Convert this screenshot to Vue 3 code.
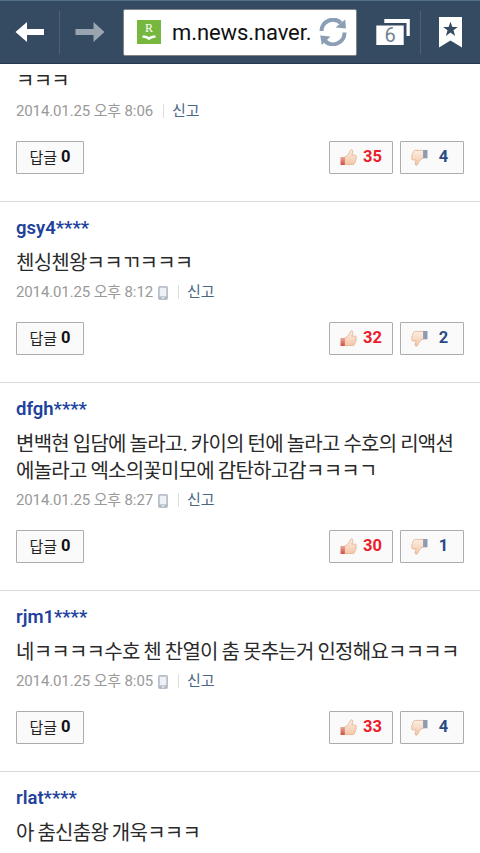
<template>
  <div class="screen">
    <header class="browser-bar">
      <button class="nav-btn back" aria-label="Back">
        <svg width="30" height="22" viewBox="0 0 30 22">
          <path d="M0.5 11 L12 1 V8 H29 V14 H12 V21 Z" fill="#fff" />
        </svg>
      </button>
      <span class="bar-line"></span>
      <button class="nav-btn forward" aria-label="Forward">
        <svg width="30" height="22" viewBox="0 0 30 22">
          <path d="M29.5 11 L18.5 1 V8 H0.5 V14 H18.5 V21 Z" fill="#99a5b0" />
        </svg>
      </button>
      <div class="address">
        <span class="favicon">
          <span class="favicon-letter">R</span>
          <svg width="14" height="6" viewBox="0 0 14 6">
            <path d="M0.5 0.5 C3 0.3 5.5 0.8 7 2.2 C8.5 0.8 11 0.3 13.5 0.5 V2.7 C10.5 2.7 8.5 3.5 7 5.3 C5.5 3.5 3.5 2.7 0.5 2.7 Z" fill="#fff" />
          </svg>
        </span>
        <span class="url">m.news.naver.</span>
        <svg class="reload" width="28" height="28" viewBox="0 0 28 28">
          <path d="M2.5 13 A11.5 11.5 0 0 1 22 5" fill="none" stroke="#8a9fb5" stroke-width="4" />
          <path d="M26.2 1.5 L27 10.5 L16.5 9.5 Z" fill="#8a9fb5" />
          <path d="M25.5 14.5 A11.5 11.5 0 0 1 6 23" fill="none" stroke="#8a9fb5" stroke-width="4" />
          <path d="M1.2 17.5 L11.5 18.5 L2.8 27 Z" fill="#8a9fb5" />
        </svg>
      </div>
      <div class="tabs">
        <svg width="34" height="28" viewBox="0 0 34 28">
          <path d="M8.3 1 H33.8 V18 H30.5 V5 H8.3 Z" fill="#fff" />
          <rect x="0.3" y="7.5" width="27.4" height="19.5" fill="#fff" />
        </svg>
        <span class="tab-count">6</span>
      </div>
      <span class="bar-line right"></span>
      <svg class="bookmark" width="23" height="31" viewBox="0 0 23 31">
        <path d="M0 0 H23 V30.5 L11.5 23.5 L0 30.5 Z" fill="#fff" />
        <path d="M11.5 4.8 L13.4 10 H18.8 L14.5 13.3 L16.1 19 L11.5 15.6 L6.9 19 L8.5 13.3 L4.2 10 H9.6 Z" fill="#344b61" />
      </svg>
    </header>

    <main class="comments">
      <article v-for="comment in comments" :key="comment.id" class="comment" :class="{ cut: !comment.user }">
        <h3 v-if="comment.user" class="user">{{ comment.user }}</h3>
        <p class="text">
          <span v-for="line in comment.lines" :key="line" class="line">{{ line }}</span>
        </p>
        <template v-if="comment.time">
          <div class="meta">
            <span class="date">2014.01.25 오후 {{ comment.time }}</span>
            <svg v-if="comment.mobile" class="phone" width="10" height="14" viewBox="0 0 10 14">
              <rect x="0.5" y="0.5" width="9" height="13" rx="1" fill="#b3bac6" stroke="#b9bfca" />
              <rect x="1.7" y="1.7" width="6.6" height="8.6" fill="#eef1f5" />
              <rect x="3.7" y="11.3" width="2.6" height="1.3" fill="#eef0f4" />
            </svg>
            <span class="meta-line"></span>
            <a class="report">신고</a>
          </div>
          <div class="actions">
            <button class="btn reply">답글 <b>0</b></button>
            <button class="btn vote up">
              <svg width="17" height="17" viewBox="0 0 17 17">
                <defs>
                  <linearGradient id="skin" x1="0" y1="0" x2="0" y2="1">
                    <stop offset="0" stop-color="#fdeee2" />
                    <stop offset="1" stop-color="#f4c6a8" />
                  </linearGradient>
                  <linearGradient id="cuff" x1="0" y1="0" x2="0" y2="1">
                    <stop offset="0" stop-color="#e9a696" />
                    <stop offset="1" stop-color="#cf5147" />
                  </linearGradient>
                </defs>
                <path d="M4.5 8 C7.5 7.2 9.3 4.6 10.3 1.8 C10.8 0.3 13 0.4 12.9 2.3 C12.8 3.8 12.2 5 11.8 6 H14.7 C16.6 6 16.7 8 15.9 8.8 C16.5 9.8 16.2 11 15.5 11.5 C15.8 12.6 15.3 13.5 14.6 13.8 C14.6 15 13.8 15.6 12.8 15.6 H4.5 Z" fill="url(#skin)" stroke="#dfb092" stroke-width="0.8" />
                <rect x="0.5" y="8" width="4.3" height="8" fill="url(#cuff)" />
              </svg>
              <b>{{ comment.up }}</b>
            </button>
            <button class="btn vote down">
              <svg width="17" height="17" viewBox="0 0 17 17">
                <path d="M12.5 9 C9.5 9.8 7.7 12.4 6.7 15.2 C6.2 16.7 4 16.6 4.1 14.7 C4.2 13.2 4.8 12 5.2 11 H2.3 C0.4 11 0.3 9 1.1 8.2 C0.5 7.2 0.8 6 1.5 5.5 C1.2 4.4 1.7 3.5 2.4 3.2 C2.4 2 3.2 1.4 4.2 1.4 H12.5 Z" fill="url(#skin)" stroke="#dfb092" stroke-width="0.8" />
                <rect x="12.2" y="1" width="4.3" height="8.3" fill="#8b9bb3" />
              </svg>
              <b>{{ comment.down }}</b>
            </button>
          </div>
        </template>
      </article>
    </main>
  </div>
</template>

<script setup>
const comments = [
  { id: 1, user: '', lines: ['ㅋㅋㅋ'], time: '8:06', mobile: false, up: 35, down: 4 },
  { id: 2, user: 'gsy4****', lines: ['첸싱첸왕ㅋㅋㄲㅋㅋㅋ'], time: '8:12', mobile: true, up: 32, down: 2 },
  {
    id: 3,
    user: 'dfgh****',
    lines: ['변백현 입담에 놀라고. 카이의 턴에 놀라고 수호의 리액션', '에놀라고 엑소의꽃미모에 감탄하고감ㅋㅋㅋㄱ'],
    time: '8:27',
    mobile: true,
    up: 30,
    down: 1
  },
  { id: 4, user: 'rjm1****', lines: ['네ㅋㅋㅋㅋ수호 첸 찬열이 춤 못추는거 인정해요ㅋㅋㅋㅋ'], time: '8:05', mobile: true, up: 33, down: 4 },
  { id: 5, user: 'rlat****', lines: ['아 춤신춤왕 개욱ㅋㅋㅋ'] }
]
</script>

<style>
body {
  overflow: hidden;
  background: #fff;
}
</style>

<style scoped>
.screen {
  width: 480px;
  height: 853px;
  overflow: hidden;
  background: #fff;
  font-family: Roboto, "Noto Sans CJK KR", sans-serif;
}

button {
  margin: 0;
  padding: 0;
  border: 0;
  background: none;
  font-family: inherit;
}

.browser-bar {
  display: flex;
  align-items: center;
  height: 64px;
  box-sizing: border-box;
  background: #344b61;
  border-top: 1px solid #527089;
  border-bottom: 1px solid #24384b;
}

.nav-btn {
  display: flex;
  justify-content: center;
  width: 59px;
}

.forward {
  width: 60px;
  padding-right: 1px;
}

.bar-line {
  width: 1px;
  height: 43px;
  background: #53606e;
}

.address {
  display: flex;
  align-items: center;
  width: 234px;
  height: 47px;
  margin-left: 3px;
  padding: 0 9px 0 13px;
  box-sizing: border-box;
  background: #fff;
  border: 1px solid #80858a;
  border-radius: 2px;
}

.favicon {
  display: flex;
  flex-direction: column;
  align-items: center;
  width: 24px;
  height: 24px;
  background: #76b83f;
}

.favicon-letter {
  height: 15px;
  color: #fff;
  font: 12px/17px "Liberation Serif", serif;
}

.url {
  flex: 1;
  margin: 2px 0 0 11px;
  color: #111;
  font-size: 22px;
  line-height: 30px;
  letter-spacing: -0.1px;
  white-space: nowrap;
}

.tabs {
  position: relative;
  height: 28px;
  margin-left: 19px;
}

.tab-count {
  position: absolute;
  left: 0;
  top: 7px;
  width: 28px;
  color: #718295;
  font-size: 20px;
  line-height: 21px;
  text-align: center;
}

.bar-line.right {
  margin-left: 10px;
}

.bookmark {
  margin-left: 18px;
}

.comment {
  padding: 13px 16px 27px;
  border-bottom: 1px solid #dadada;
}

.comment.cut {
  padding-top: 4px;
}

.user {
  margin: 0 0 9px;
  color: #21429c;
  font-size: 18.5px;
  font-weight: 600;
  line-height: 26px;
}

.text {
  margin: 0;
  color: #2a2a2a;
  font-size: 20px;
  line-height: 27px;
  letter-spacing: -0.75px;
  word-spacing: -0.4px;
}

.line {
  display: block;
  white-space: nowrap;
}

.meta {
  display: flex;
  align-items: center;
  height: 20px;
  margin: 5px 0 20px;
  color: #999;
  font-size: 15px;
  line-height: 20px;
  letter-spacing: -0.13px;
}

.cut .meta {
  margin-top: 6px;
}

.phone {
  margin: 2px 0 0 5px;
}

.meta-line {
  width: 1px;
  height: 14px;
  margin: 0 8px 0 10px;
  background: #ddd;
}

.report {
  color: #4b6684;
}

.actions {
  display: flex;
  gap: 7px;
}

.btn {
  display: flex;
  align-items: center;
  height: 33px;
  box-sizing: border-box;
  border: 1px solid #acacac;
  border-radius: 1px;
  background: #fafafa;
  color: #222;
  font-size: 15px;
}

.btn b {
  font-size: 16.5px;
  font-weight: 700;
  line-height: 20px;
}

.reply {
  justify-content: center;
  gap: 4px;
  width: 68px;
  margin-right: auto;
  padding-bottom: 2px;
}

.reply b {
  color: #111;
}

.vote {
  width: 64px;
  padding: 0 4px 0 10px;
}

.vote b {
  flex: 1;
  margin-bottom: 2px;
  text-align: center;
}

.up b {
  color: #ec1c2b;
}

.down b {
  color: #2b4a85;
}
</style>
